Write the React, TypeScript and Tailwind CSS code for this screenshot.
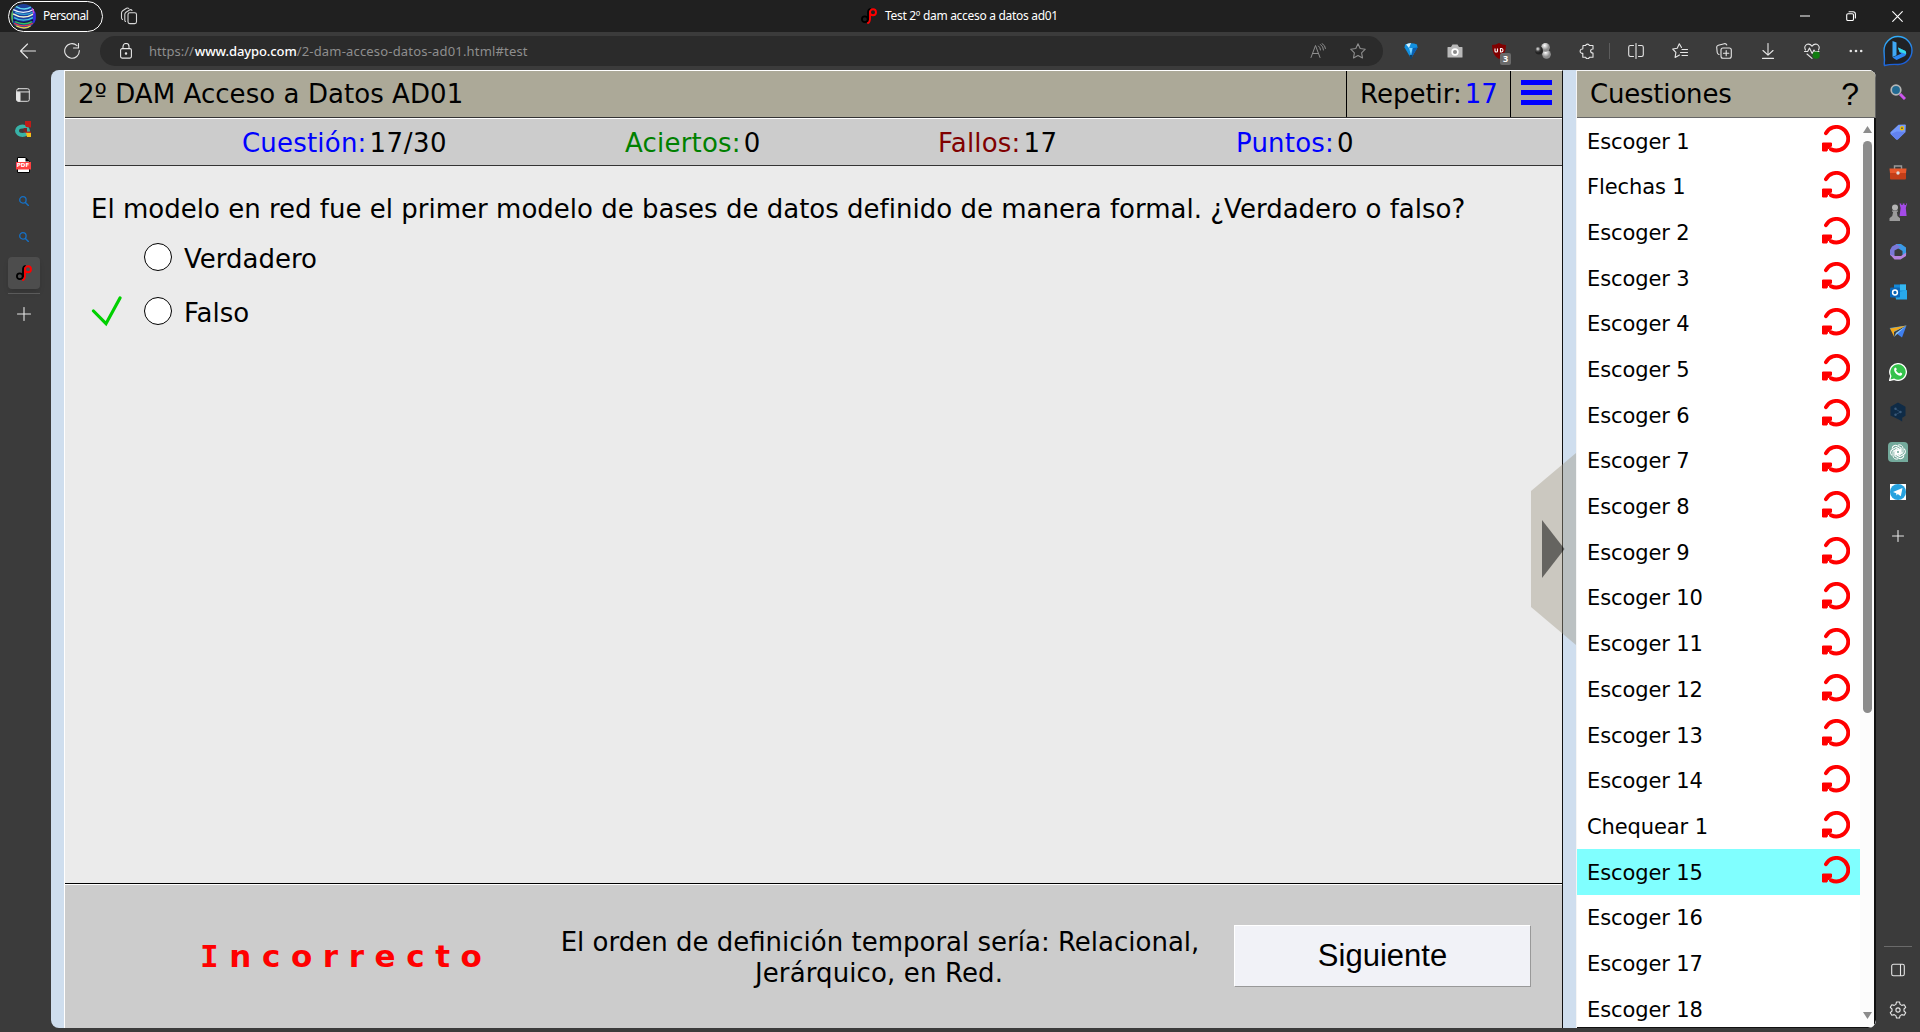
import type { ReactNode } from "react";

const questions: { name: string; repeat: boolean }[] = [
  { name: "Escoger 1", repeat: true },
  { name: "Flechas 1", repeat: true },
  ...Array.from({ length: 13 }, (_, i) => ({ name: `Escoger ${i + 2}`, repeat: true })),
  { name: "Chequear 1", repeat: true },
  { name: "Escoger 15", repeat: true },
  { name: "Escoger 16", repeat: false },
  { name: "Escoger 17", repeat: false },
  { name: "Escoger 18", repeat: false },
];

type IconProps = { size?: number; children: ReactNode; className?: string; box?: number };

function Icon({ size = 16, box = 16, children, className = "" }: IconProps) {
  return (
    <svg
      width={size}
      height={size}
      viewBox={`0 0 ${box} ${box}`}
      fill="none"
      stroke="currentColor"
      strokeWidth="1.1"
      strokeLinecap="round"
      strokeLinejoin="round"
      className={`shrink-0 ${className}`}
    >
      {children}
    </svg>
  );
}

function Cell({ children }: { children: ReactNode }) {
  return <div className="flex h-full w-11 shrink-0 items-center justify-center">{children}</div>;
}

function DaypoLogo() {
  return (
    <Icon>
      <circle cx="3.800" cy="11.200" r="2.900" stroke="#000" strokeWidth="1.800" />
      <path d="M7 11.500V4.500Q7 1.500 9 1" stroke="#000" strokeWidth="1.800" />
      <circle cx="12" cy="4.200" r="3" stroke="#f00" strokeWidth="1.900" />
      <path d="M9 4v6q0 4.500-2 5" stroke="#f00" strokeWidth="1.900" />
    </Icon>
  );
}

function RepeatIcon() {
  return (
    <svg width="28" height="28" viewBox="0 0 28 28" fill="none">
      <path d="M4 8.200A11.800 11.800 0 1 1 9 24.200" stroke="#f00" strokeWidth="3.900" strokeLinecap="round" />
      <path d="M0.500 18H9.500v3L7.500 23l-2 1-.5 2H0.500z" fill="#f00" stroke="#f00" strokeWidth="1" strokeLinejoin="round" />
    </svg>
  );
}

function TitleBar() {
  return (
    <header className="flex h-8 shrink-0 items-center bg-[#202020] font-['Noto_Sans',sans-serif] text-white">
      <div className="ml-2 flex h-[31px] w-[95px] items-center rounded-full border border-white pl-[2px]">
        <svg width="25" height="25" viewBox="0 0 24 24">
          <clipPath id="avatar"><circle cx="12" cy="12" r="12" /></clipPath>
          <g clipPath="url(#avatar)" fill="none" strokeWidth="1.300">
            <rect width="24" height="24" fill="#1c3f9a" />
            <path d="M7 0l-6 5v14l5 4" stroke="#6be04a" />
            <path d="M4 2q8 5 15 1" stroke="#5fd7ef" />
            <path d="M1 5q11 6 21 0" stroke="#e8f4ff" />
            <path d="M4 8q9 4 17 0" stroke="#32a9d8" />
            <path d="M2 9.500q10 6 20 0" stroke="#f6f4d0" />
            <path d="M3 13q9 5 18 0" stroke="#45c8e8" />
            <path d="M2 15q10 6 20 0" stroke="#10144a" />
            <path d="M4 17q9 4 16 0" stroke="#35c25a" />
            <path d="M3 18.500q10 5 18 0" stroke="#e23a4e" />
            <path d="M5 21q8 4 14 0" stroke="#e8d04a" />
            <path d="M22.500 7v11" stroke="#3a2be0" strokeWidth="2.500" />
            <path d="M20.500 4l1.500 5" stroke="#d64ad0" />
          </g>
        </svg>
        <span className="ml-[7px] text-[12px] leading-4 tracking-[-0.5px]">Personal</span>
      </div>
      <Icon size={18} box={18} className="ml-[17px] text-[#d8d8d8]">
        <rect x="8" y="5.800" width="8.500" height="10.800" rx="1.800" />
        <path d="M5.500 14.500q-.7-.4-.7-1.500V7.500q0-1.500 1.200-2.300L9.500 3q1.500-.8 2.500.3M2.500 12.500Q1.500 12 1.500 10.500V6q0-1.500 1.200-2.300L6.500 1.300Q8 .6 8.800 1.500" />
      </Icon>
      <div className="ml-[723px] flex items-center">
        <DaypoLogo />
        <span className="ml-2 text-[12px] leading-4 tracking-[-0.3px]">Test 2º dam acceso a datos ad01</span>
      </div>
      <div className="ml-auto flex items-center gap-9 pr-[17px]">
        <Icon size={10} box={10}><path d="M0 5h10" /></Icon>
        <Icon size={10} box={10}><rect x=".7" y="2.700" width="6.800" height="6.800" rx="1.300" /><path d="M3 .7h4q2.400 0 2.400 2.400V7" /></Icon>
        <Icon size={11} box={11}><path d="M.7.7l9.600 9.600M10.300.7L.7 10.300" /></Icon>
      </div>
    </header>
  );
}

function Toolbar() {
  return (
    <div className="flex h-[38px] shrink-0 items-center text-[#e6e6e6]">
      <Icon className="ml-5"><path d="M.5 8h15M7.500 1L.5 8l7 7" /></Icon>
      <Icon className="ml-7"><path d="M15.300 7.500A7.300 7.300 0 1 1 13 2.600M9.500 5h5V.5" /></Icon>
      <div className="ml-5 flex h-[30px] w-[1283px] items-center rounded-full bg-[#2b2b2b] font-['Noto_Sans',sans-serif] text-[13px] leading-4 text-[#8e8e8e]">
        <Icon className="ml-[18px] text-[#e6e6e6]">
          <rect x="2.600" y="5.600" width="10.800" height="9.500" rx="1.500" />
          <path d="M5 5.500V3.500a3 3 0 0 1 6 0v2" />
          <circle cx="8" cy="10.400" r=".7" fill="currentColor" />
        </Icon>
        <span className="ml-[15px]">https://</span>
        <span className="ml-px font-medium tracking-[-0.09px] text-white">www.daypo.com</span>
        <span className="tracking-[0.18px]">/2-dam-acceso-datos-ad01.html#test</span>
        <Icon className="mr-6 ml-auto">
          <path d="M1 14.500L5.500 2.500 10 14.500M2.500 10.500h6M8.500 3q2 1.500 2 4M10.500 1.500q3 2 3 5.500M12 .5q3.500 2 3.500 5" strokeWidth="1" />
        </Icon>
        <Icon className="mr-[17px]"><path d="M8 .8l2.200 4.700 5.100.7-3.700 3.600.9 5.100L8 12.500l-4.500 2.400.9-5.100L.7 6.200l5.100-.7z" /></Icon>
      </div>
      <div className="flex h-full items-center pl-[6px]">
        <Cell>
          <svg width="14" height="16" viewBox="0 0 14 16"><path d="M1 1.500Q7-1 13 1.500L13.500 4.500 7 15.500.5 4.500z" fill="#1290e0" /><path d="M2 1.500L5 5l2-5Q4 0 2 1.500" fill="#d5f3ff" /><path d="M5 5h3.500L7 12z" fill="#7bd2ff" /><path d="M9 5l4.500-.5L7 15.500z" fill="#0a5db0" /><path d="M5.500 12h3l-1 4h-1z" fill="#0c3f66" /></svg>
        </Cell>
        <Cell>
          <svg width="16" height="14" viewBox="0 0 16 14"><path d="M1 3h3l1.500-2.500h5L12 3h3q.5 0 .5.500V13q0 .5-.5.5H1q-.5 0-.5-.5V3.500Q.5 3 1 3z" fill="#b9b9b9" /><circle cx="8" cy="8" r="3.700" fill="#fff" /><circle cx="8" cy="8" r="2" fill="#8a8a8a" /></svg>
        </Cell>
        <Cell>
          <div className="relative">
            <svg width="16" height="16" viewBox="0 0 16 16"><path d="M8 0q3 2 7 2 0 10-7 14Q1 12 1 2q4 0 7-2z" fill="#800000" /><path d="M4 5.500v2.500q0 1 1 1h.5q1 0 1-1V5.500M9.500 5.500V9h1q1.500-.2 1.500-1.750T10.500 5.500z" stroke="#fff" strokeWidth="1.100" fill="none" /></svg>
            <span className="absolute top-[10px] left-[9px] flex h-3 w-[11px] items-center justify-center rounded-[2px] bg-[#6a6a6a] font-['Noto_Sans',sans-serif] text-[9px] font-bold text-white">3</span>
          </div>
        </Cell>
        <Cell>
          <svg width="16" height="16" viewBox="0 0 16 16"><defs><radialGradient id="ball" cx=".4" cy=".3"><stop offset="0" stopColor="#fff" /><stop offset="1" stopColor="#8c8c8c" /></radialGradient><radialGradient id="darkball" cx=".35" cy=".3"><stop offset="0" stopColor="#eee" /><stop offset=".6" stopColor="#444" /><stop offset="1" stopColor="#222" /></radialGradient></defs><circle cx="11.500" cy="11.300" r="4.400" fill="url(#ball)" /><circle cx="10.500" cy="4.300" r="4.400" fill="url(#ball)" /><circle cx="4" cy="7.500" r="3.900" fill="url(#darkball)" /></svg>
        </Cell>
        <Cell>
          <Icon><path d="M4 2.500h2.600a2 2 0 0 1 3.800 0H14V6q-2.400 0-2.400 2T14 10v4.200h-3.500a2 2 0 0 1-3.900 0H3.800V10.300A2.200 2.200 0 1 1 3.800 6z" /></Icon>
        </Cell>
        <div className="mr-1 h-4 w-px bg-[#5c5c5c]" />
        <Cell><Icon><path d="M8 .5v15M5.500 2.500H2.400q-1.700 0-1.700 1.700v7.600q0 1.700 1.700 1.700h3.100M10.500 2.500h3.100q1.700 0 1.700 1.700v7.600q0 1.700-1.700 1.700h-3.100" /></Icon></Cell>
        <Cell><Icon><path d="M9.500 4.500L7.300.8 5.200 5.200.7 6l3.200 3.400-.8 5L7.500 12M10 6.500h5.500M8.500 9.500h7M10 12.500h5.500" /></Icon></Cell>
        <Cell><Icon><rect x="5" y="5" width="10.300" height="10.300" rx="2" /><path d="M10.200 7.500v5.300M7.500 10.200h5.300M3 11.500Q1.500 10.800 1.200 9.500L.7 4.300Q.6 2.700 2.300 2.200l6-1.500q1.800-.3 2.500 1.300" /></Icon></Cell>
        <Cell><Icon><path d="M8 .5v11.500M3 7.500l5 4.700 5-4.700M2.500 15.400h11" /></Icon></Cell>
        <Cell>
          <Icon><path d="M1.500 7Q-.5 3 3.200 1.300 6 .5 8 3.200 10 .5 12.800 1.300 16.500 3 14.500 7M.5 8.500h3.200L5.500 5l2.700 5.500L10 7l1 1.500h4M3 11l5 4.300" /><circle cx="12.200" cy="12.200" r="3.600" fill="#107c10" stroke="none" /></Icon>
        </Cell>
        <Cell><Icon><g fill="currentColor" stroke="none"><circle cx="2.800" cy="8" r="1.300" /><circle cx="8" cy="8" r="1.300" /><circle cx="13.200" cy="8" r="1.300" /></g></Icon></Cell>
        <div className="ml-[4px] flex w-8 items-center justify-center">
          <svg width="30" height="32" viewBox="0 0 30 32"><defs><linearGradient id="bing" x1="0" y1="0" x2="0.300" y2="1"><stop offset="0" stopColor="#35b8ff" /><stop offset="1" stopColor="#1b5fd8" /></linearGradient></defs><path d="M1.500 30.500Q1 29 1.500 25L1 16A14 14 0 1 1 15 29.500Q8 29 1.500 30.500z" fill="#202225" stroke="url(#bing)" strokeWidth="1.400" /><path d="M9.500 6l4 1.600v12.600L9.500 22z" fill="#3fa8f5" /><path d="M15 12.500l7.500 3.500q2 3.500-1 5.200L13.500 25 9.500 22.500l9-4-2-1.200z" fill="#2a86f0" /><path d="M15 12.500l7.500 3.500q1 2 .3 3l-6.300-2.200z" fill="#37dbe6" /></svg>
        </div>
      </div>
    </div>
  );
}

function LeftRail() {
  return (
    <nav className="flex w-[51px] shrink-0 flex-col pt-[5px] text-[#e6e6e6]">
      <div className="flex w-[46px] flex-col items-center">
        <div className="flex h-9 items-end pb-[9px]"><Icon size={14}><rect x=".8" y=".8" width="14.400" height="14.400" rx="2" /><path d="M1 4.500h14" /><path d="M1 5h3.600v10H2L1 14z" fill="currentColor" /></Icon></div>
        <div className="flex h-9 items-center">
          <svg width="16" height="16" viewBox="0 0 16 16"><ellipse cx="7.500" cy="9.700" rx="5.500" ry="4.200" fill="none" stroke="#38b2a8" strokeWidth="4" /><path d="M10 0h6v6.500l-5-.5-1-2z" fill="#c01c18" /><path d="M8.500 7H12v4H8.500z" fill="#7a2424" /><path d="M11 11.500h5V16h-4z" fill="#f3c01b" /><path d="M10 11.200h6" stroke="#c01c18" strokeWidth="1.200" /></svg>
        </div>
        <div className="flex h-9 items-center">
          <div className="relative flex h-4 w-[15px] items-center justify-center">
            <svg width="15" height="16" viewBox="0 0 15 16" className="absolute inset-0"><path d="M1.500.5h8l4 3.800v11.200h-12z" fill="#fff" stroke="#000" /><path d="M9.500.5v4h4z" fill="#000" /><path d="M0 5h15v7.500H0z" fill="#ff4040" /></svg>
            <span className="relative mt-px font-['DejaVu_Sans',sans-serif] text-[5.500px] leading-none font-bold text-white">PDF</span>
          </div>
        </div>
        {[0, 1].map((n) => (
          <div key={n} className="flex h-9 items-center pl-[2px]"><Icon size={10} box={10} className="text-[#1670c4]"><circle cx="3.900" cy="3.900" r="3.200" strokeWidth="1.300" /><path d="M6.400 6.400l3 3" strokeWidth="1.400" /></Icon></div>
        ))}
        <div className="mt-[2px] ml-[2px] flex size-8 items-center justify-center rounded bg-[#4d4d4d] shadow-md"><DaypoLogo /></div>
        <div className="mt-1 ml-[2px] h-px w-8 bg-[#5a5a5a]" />
        <Icon size={14} box={14} className="mt-[13px] ml-px"><path d="M7 .5v13M.5 7h13" /></Icon>
      </div>
    </nav>
  );
}

function RightRail() {
  const apps: ReactNode[] = [
    <svg key="search" width="16" height="16" viewBox="0 0 16 16"><path d="M10 10l5 5" stroke="#cc55ee" strokeWidth="3" /><circle cx="6" cy="6" r="4.800" fill="#226a92" stroke="#b5b5b5" strokeWidth="1.700" /></svg>,
    <svg key="tag" width="16" height="16" viewBox="0 0 16 16"><path d="M8.500.8L15 .5q.7 0 .8.700L15.500 8 8 15.300q-1 .7-2 0L.7 10q-.8-1 0-2z" fill="#7499fb" /><path d="M.7 10l6-2.500L15.500 8 8 15.300q-1 .7-2 0z" fill="#6282f0" /><circle cx="12" cy="4.300" r="1.600" fill="#555" stroke="#f2c200" strokeWidth="1.300" /></svg>,
    <svg key="tools" width="18" height="15" viewBox="0 0 18 15"><path d="M5.500 4V1h7v3" fill="none" stroke="#999" strokeWidth="1.400" /><path d="M.5 3.500h17l-.5 5H1z" fill="#e8582b" /><path d="M1 8h16v5.500q0 1-1 1H2q-1 0-1-1z" fill="#c33e18" /><circle cx="9" cy="8" r="1.700" fill="#ddd" /></svg>,
    <svg key="games" width="18" height="18" viewBox="0 0 18 18"><path d="M10.500.5h1.800v1.500h1.400V.5h1.800v1.500H17V.5h1L16.800 5l.8 8h-7l1-8z" fill="#a44be8" /><circle cx="6" cy="4.500" r="3" fill="#b4b4b4" /><path d="M3 7.500h6v1.300H7.800l.7 4.200 2.500 2.300V18H.5v-2.700L3.200 13l1-4.200H3z" fill="#9b9b9b" /></svg>,
    <svg key="m365" width="18" height="18" viewBox="0 0 18 18"><path d="M7 1h5l5 3.500V12l-3.500 2.500V8L7 4z" fill="#3a9be6" /><path d="M7.500 1L3 3.500 1 7v5l4.500 2V7.500L12 4z" fill="#7a78d8" /><path d="M1 11.500L5.500 16.500h6L17 13l.2-3.500L12 13H6z" fill="#b583de" /></svg>,
    <svg key="outlook" width="17" height="16" viewBox="0 0 17 16"><path d="M4 .5h12v12H4z" fill="#1489d8" /><path d="M10 .5h6v6h-6z" fill="#35b8f1" /><path d="M5 9l12-3v9.500H6z" fill="#28a8ea" /><rect y="3.500" width="10" height="10" rx="1" fill="#0a66b8" /><circle cx="5" cy="8.500" r="2.400" fill="none" stroke="#fff" strokeWidth="1.500" /></svg>,
    <svg key="send" width="18" height="14" viewBox="0 0 18 14"><path d="M.5 3L17.500.5 5 7z" fill="#4aa7f5" /><path d="M1 3.500L17.500.5 5 6.500v5z" fill="#f1a91d" /><path d="M17.500.5L13 12.500 7 8z" fill="#3f7ff0" /><path d="M17.500.5L7 8l-2 4z" fill="#8bc8f5" /></svg>,
    <svg key="whatsapp" width="18" height="18" viewBox="0 0 18 18"><path d="M.5 17.500L1.800 13A8.300 8.300 0 1 1 5.200 16.300z" fill="#34c24b" stroke="#fff" strokeWidth="1.300" /><path d="M5.500 5q1.500-1.500 2.300 1.300L7 7.500q1 2.200 3.200 3l1.100-1q3 .8 1.200 2.700-2 1.500-5.200-1.200Q4.200 8 5.500 5z" fill="#fff" /></svg>,
    <svg key="deepl" width="16" height="20" viewBox="0 0 16 20"><path d="M8 .5l7.500 4.200v9l-3.300 2V19.500L8.800 17.500.5 13.500V4.700z" fill="#0f2b46" /><path d="M5.500 7l5 3-5 2.700" stroke="#2a4a6a" fill="none" /><g fill="#3a5a7a"><circle cx="5.500" cy="6.700" r="1.200" /><circle cx="10.500" cy="10" r="1.200" /><circle cx="5.500" cy="12.800" r="1.200" /></g></svg>,
    <svg key="gpt" width="20" height="20" viewBox="0 0 20 20"><path d="M4 0h12q4 0 4 4v16H4q-4 0-4-4V4q0-4 4-4z" fill="#74aa9c" /><g fill="none" stroke="#fff" strokeWidth="1">{[0, 60, 120, 180, 240, 300].map((a) => (<path key={a} d="M10 3.200a3.500 3.500 0 0 1 5 3.200v4.400l-3.500 2V8L8.200 6" transform={`rotate(${a} 10 10)`} />))}</g></svg>,
    <svg key="telegram" width="16" height="16" viewBox="0 0 16 16"><path d="M0 0h16v16H0z" fill="#fff" /><circle cx="8" cy="8" r="8" fill="#27a2df" /><path d="M3 8l9.500-4-1.700 8.200L7.800 10l-1.300 1.500-.3-2.200z" fill="#fff" /></svg>,
  ];
  return (
    <aside className="flex w-11 shrink-0 flex-col items-center pt-[2px] text-[#e6e6e6]">
      {apps.map((app, i) => (
        <div key={i} className="flex h-10 items-center">{app}</div>
      ))}
      <Icon size={12} box={12} className="mt-[18px]"><path d="M6 .5v11M.5 6h11" /></Icon>
      <div className="mt-auto h-px w-7 bg-[#6a6a6a]" />
      <Icon size={14} box={14} className="mt-4"><rect x=".7" y="1.300" width="12.600" height="11.400" rx="1.800" /><path d="M9.500 1.500v11" /></Icon>
      <Icon size={18} box={18} className="mt-6 mb-[13px]">
        <circle cx="9" cy="9" r="2.100" />
        <path d="M7.500 1h3l.6 2.400 1.700 1 2.400-.7 1.500 2.600L15 8v2l1.700 1.700-1.500 2.600-2.400-.7-1.700 1-.6 2.400h-3l-.6-2.400-1.700-1-2.400.7-1.500-2.600L3 10V8L1.300 6.300l1.500-2.600 2.400.7 1.700-1z" />
      </Icon>
    </aside>
  );
}

function Stat({ label, value, className }: { label: string; value: string; className: string }) {
  return (
    <div className={`flex shrink-0 items-center ${className}`}>
      <span className="tracking-[0.2px]">{label}</span>
      <span className="ml-[3px] tracking-[0.5px] text-black">{value}</span>
    </div>
  );
}

function Option({ label, correct, className }: { label: string; correct?: boolean; className: string }) {
  return (
    <div className={`flex h-8 items-center ${className}`}>
      <div className="flex w-[53px] items-center">
        {correct && (
          <svg width="31" height="31" viewBox="0 0 31 31" fill="none"><path d="M2.500 15L15 27.700 29 2" stroke="#00d000" strokeWidth="3.200" strokeLinecap="round" /></svg>
        )}
      </div>
      <div className="size-7 rounded-full border border-black bg-white" />
      <span className="mt-1 ml-3">{label}</span>
    </div>
  );
}

function TestPanel() {
  return (
    <main className="flex w-[1499px] shrink-0 flex-col border-t border-r border-l border-t-white border-r-[#111] border-l-white text-[26px] leading-[31px] text-black">
      <div className="flex h-[47px] shrink-0 items-center border-b border-[#333] bg-[#aca998]">
        <h1 className="ml-[13px] flex-1 tracking-[0.06px]">2º DAM Acceso a Datos AD01</h1>
        <div className="flex h-full w-[164px] items-center border-l border-black pl-[13px]">
          Repetir:<span className="ml-[3px] text-[#0000ff]">17</span>
        </div>
        <div className="flex h-full w-[52px] flex-col items-start gap-[5px] border-l border-black pt-[9px] pl-[10px]">
          <div className="h-[5px] w-[31px] bg-[#0000ff]" />
          <div className="h-[5px] w-[31px] bg-[#0000ff]" />
          <div className="h-[5px] w-[31px] bg-[#0000ff]" />
        </div>
      </div>
      <div className="flex h-12 shrink-0 items-center border-t border-b border-t-white border-b-[#333] bg-[#cccccc] pt-[3px] pl-[177px]">
        <Stat label="Cuestión:" value="17/30" className="w-[383px] text-[#0000ff]" />
        <Stat label="Aciertos:" value="0" className="w-[313px] text-[#008000]" />
        <Stat label="Fallos:" value="17" className="w-[298px] text-[#800000]" />
        <Stat label="Puntos:" value="0" className="text-[#0000ff]" />
      </div>
      <section className="flex h-[718px] shrink-0 flex-col border-b border-black bg-[#ebebeb] pl-[26px]">
        <p className="mt-7 tracking-[0.01px] whitespace-nowrap">El modelo en red fue el primer modelo de bases de datos definido de manera formal. ¿Verdadero o falso?</p>
        <Option label="Verdadero" className="mt-4" />
        <Option label="Falso" correct className="mt-[22px]" />
      </section>
      <footer className="flex flex-1 items-center border-t border-white bg-[#cccccc]">
        <strong className="ml-[135px] w-[317px] text-[31px] tracking-[10.6px] text-[#ff0000]">
          <span className="font-['DejaVu_Sans_Mono',monospace]">I</span>ncorrecto
        </strong>
        <p className="mt-[2px] ml-[25px] w-[676px] text-center">
          <span className="tracking-[0px]">El orden de definición temporal sería: Relacional,</span><br />
          <span className="mr-[2px] tracking-[0.120px]">Jerárquico, en Red.</span>
        </p>
        <button className="mb-[2px] ml-4 h-[62px] w-[297px] border border-t-white border-r-[#999] border-b-[#999] border-l-white bg-[#f1f2f7] font-['Liberation_Sans',Arial,sans-serif] text-[31px] leading-none">Siguiente</button>
      </footer>
    </main>
  );
}

function QuestionList() {
  return (
    <section className="flex w-[300px] shrink-0 flex-col border-t border-l border-[#f5f5f5] bg-white text-black">
      <div className="flex h-[47px] shrink-0 items-center justify-between border-r border-b border-[#666] bg-[#aca998] pr-4 pl-[13px] text-[26px]">
        <h2 className="tracking-[-0.2px]">Cuestiones</h2>
        <span className="font-['Liberation_Sans',Arial,sans-serif] text-[32px] leading-none">?</span>
      </div>
      <div className="flex min-h-0 flex-1 rounded-br-lg border-r-2 border-b border-[#111]">
        <ul className="w-[283px] overflow-hidden text-[21px]">
          {questions.map((q) => (
            <li
              key={q.name}
              className={`flex h-[45.7px] items-center justify-between pr-[10px] pl-[10px] ${q.name === "Escoger 15" ? "bg-[#80ffff]" : ""}`}
            >
              <span className="mt-[3px] tracking-[-0.1px]">{q.name}</span>
              {q.repeat && <span className="mb-[3px]"><RepeatIcon /></span>}
            </li>
          ))}
        </ul>
        <div className="flex flex-1 flex-col items-center bg-[#fcfcfc] pt-2 pb-2">
          <svg width="9" height="7" viewBox="0 0 9 7"><path d="M4.500 0L9 7H0z" fill="#8b8b8b" /></svg>
          <div className="mt-2 h-[572px] w-[9px] rounded-full bg-[#8b8b8b]" />
          <svg width="9" height="7" viewBox="0 0 9 7" className="mt-auto"><path d="M4.500 7L9 0H0z" fill="#8b8b8b" /></svg>
        </div>
      </div>
    </section>
  );
}

export default function App() {
  return (
    <div className="flex h-[1032px] w-[1920px] flex-col overflow-hidden bg-[#3b3b3b]">
      <TitleBar />
      <Toolbar />
      <div className="flex min-h-0 flex-1">
        <LeftRail />
        <div className="relative mb-1 flex w-[1825px] shrink-0 overflow-hidden rounded-lg bg-[#cfdeee] pl-[13px] font-['DejaVu_Sans',Verdana,sans-serif]">
          <TestPanel />
          <div className="w-[13px] shrink-0" />
          <QuestionList />
          <svg width="45" height="192" viewBox="0 0 45 192" className="absolute top-[383px] left-[1480px]">
            <path d="M45 0v192L0 154V38z" fill="#a09986" fillOpacity=".42" />
            <path d="M11 67l22.500 29L11 125z" fill="#000" fillOpacity=".5" />
          </svg>
        </div>
        <RightRail />
      </div>
    </div>
  );
}
